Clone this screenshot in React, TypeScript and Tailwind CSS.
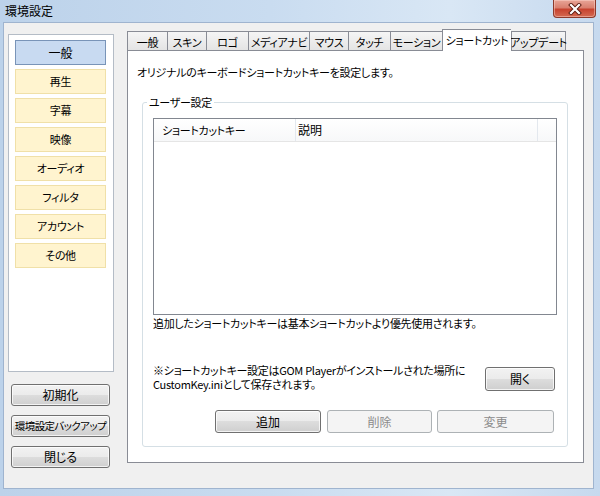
import React from "react";

const font =
  "font-['Meiryo_UI','Noto_Sans_CJK_JP',sans-serif] [font-feature-settings:'palt']";

const btnNormal =
  "border border-[#707070] bg-[linear-gradient(to_bottom,#f2f2f2_0%,#ebebeb_49%,#dddddd_50%,#cfcfcf_100%)] shadow-[inset_0_0_0_1px_rgba(255,255,255,0.75)] text-black";
const btnDisabled = "border border-[#adb2b5] bg-[#f4f4f4] text-[#8b8b8b]";

function Btn({
  children,
  className = "",
  disabled = false,
}: {
  children: React.ReactNode;
  className?: string;
  disabled?: boolean;
}) {
  return (
    <div
      className={`flex items-center justify-center rounded-[3px] leading-none whitespace-nowrap ${
        disabled ? btnDisabled : btnNormal
      } ${className}`}
    >
      {children}
    </div>
  );
}

const sideItems = ["再生", "字幕", "映像", "オーディオ", "フィルタ", "アカウント", "その他"];

const tabs: { label: string; w: string; active?: boolean }[] = [
  { label: "一般", w: "w-[40px]" },
  { label: "スキン", w: "w-[39px]" },
  { label: "ロゴ", w: "w-[42px]" },
  { label: "メディアナビ", w: "w-[61px]" },
  { label: "マウス", w: "w-[39px]" },
  { label: "タッチ", w: "w-[42px]" },
  { label: "モーション", w: "w-[52px]" },
  { label: "ショートカット", w: "w-[69px]", active: true },
  { label: "アップデート", w: "w-[55px]" },
];

const small = "text-[11px] tracking-[-0.3px] whitespace-nowrap";

export default function App() {
  return (
    <div
      className={`w-[600px] h-[496px] flex flex-col overflow-hidden bg-[linear-gradient(to_right,#bcd2ea_0%,#c9dcf0_45%,#d9e7f5_75%,#c6d9ee_100%)] text-black ${font}`}
    >
      {/* title bar */}
      <div className="h-[22px] flex items-start justify-between shrink-0">
        <span className="pl-[5px] pt-[4px] text-[12px] leading-[14px] text-black">環境設定</span>
        <div className="mr-[4px] w-[43px] h-[18px] rounded-b-[4px] border border-t-0 border-[#8c3a2c] bg-[linear-gradient(to_bottom,#e8a597_0%,#d9806f_45%,#c7432f_55%,#d46a52_100%)] shadow-[inset_0_0_0_1px_rgba(255,220,210,0.45)] flex items-center justify-center">
          <svg width="14" height="12" viewBox="0 0 14 12">
            <path d="M3 2 L11 10 M11 2 L3 10" stroke="#5a1a10" strokeWidth="4" strokeLinecap="square" />
            <path d="M3 2 L11 10 M11 2 L3 10" stroke="#ffffff" strokeWidth="2.2" strokeLinecap="square" />
          </svg>
        </div>
      </div>

      {/* client area */}
      <div className="ml-[3px] mr-[6px] h-[467px] shrink-0 border border-[#9fb4cf] bg-[#f0f0f0] flex">
        {/* left column */}
        <div className="ml-[4px] mt-[11px] w-[106px] flex flex-col">
          <div className="h-[338px] border border-[#b4bcc6] bg-white pt-[5px] pl-[6px] flex flex-col gap-[4px]">
            <div className="w-[91px] h-[25px] border border-[#7994b8] bg-[#c8daf1] flex items-center justify-center text-[12px]">
              一般
            </div>
            {sideItems.map((s) => (
              <div
                key={s}
                className={`w-[91px] h-[25px] border border-[#f0e0a8] bg-[#fff4cf] flex items-center justify-center ${small}`}
              >
                {s}
              </div>
            ))}
          </div>
          <div className="mt-[12px] pl-[3px] flex flex-col gap-[9px]">
            <Btn className="w-[99px] h-[22px] text-[12px]">初期化</Btn>
            <Btn className="w-[99px] h-[22px] text-[10.5px] tracking-[-0.6px]">環境設定バックアップ</Btn>
            <Btn className="w-[99px] h-[22px] text-[12px]">閉じる</Btn>
          </div>
        </div>

        {/* right column */}
        <div className="ml-[13px] mt-[6px] flex flex-col">
          <div className="h-[21px] flex items-end">
            {tabs.map((t, i) =>
              t.active ? (
                <div
                  key={t.label}
                  className={`${t.w} h-[22px] -mb-px relative z-10 bg-white border-l border-t border-[#898c95] flex items-center justify-center leading-none pb-[1px] ${small}`}
                >
                  {t.label}
                </div>
              ) : (
                <div
                  key={t.label}
                  className={`${t.w} h-[19px] border-l border-t ${
                    i === tabs.length - 1 ? "border-r" : ""
                  } border-[#898c95] bg-[linear-gradient(to_bottom,#f5f5f5,#e4e4e4)] flex items-center justify-center leading-none pt-[2px] ${small}`}
                >
                  {t.label}
                </div>
              )
            )}
          </div>

          <div className="w-[457px] h-[413px] border border-[#898c95] bg-white flex flex-col">
            <div className={`pl-[9px] pt-[15px] leading-[12px] ${small}`}>
              オリジナルのキーボードショートカットキーを設定します。
            </div>

            <fieldset className="mt-[17px] ml-[14px] w-[426px] h-[352px] border border-[#d5dfe5] rounded-[3px] flex flex-col">
              <legend className={`ml-[4px] px-[2px] leading-[14px] ${small}`}>ユーザー設定</legend>

              <div className="mt-[9px] ml-[10px] w-[404px] h-[197px] border border-[#828790] bg-white flex flex-col">
                <div className="h-[23px] flex border-b border-[#e5e5e5] bg-[linear-gradient(to_bottom,#ffffff,#f7f8f9)]">
                  <div className={`w-[142px] border-r border-[#e3e8ee] pl-[8px] flex items-center ${small}`}>
                    ショートカットキー
                  </div>
                  <div className="w-[242px] border-r border-[#e3e8ee] pl-[2px] flex items-center text-[12px]">
                    説明
                  </div>
                  <div className="flex-1" />
                </div>
              </div>

              <div className={`mt-[1px] ml-[10px] leading-[14px] ${small}`}>
                追加したショートカットキーは基本ショートカットより優先使用されます。
              </div>

              <div className="mt-[33px] ml-[10px] mr-[12px] flex items-start justify-between">
                <div className={`leading-[14px] ${small}`}>
                  <div>※ショートカットキー設定はGOM Playerがインストールされた場所に</div>
                  <div>CustomKey.iniとして保存されます。</div>
                </div>
                <Btn className="mt-[4px] w-[70px] h-[24px] text-[12px]">開く</Btn>
              </div>

              <div className="mt-[19px] ml-[72px] flex">
                <Btn className="w-[106px] h-[23px] text-[12px]">追加</Btn>
                <Btn disabled className="ml-[6px] w-[105px] h-[23px] text-[12px]">
                  削除
                </Btn>
                <Btn disabled className="ml-[5px] w-[117px] h-[23px] text-[12px]">
                  変更
                </Btn>
              </div>
            </fieldset>
          </div>
        </div>
      </div>
    </div>
  );
}
